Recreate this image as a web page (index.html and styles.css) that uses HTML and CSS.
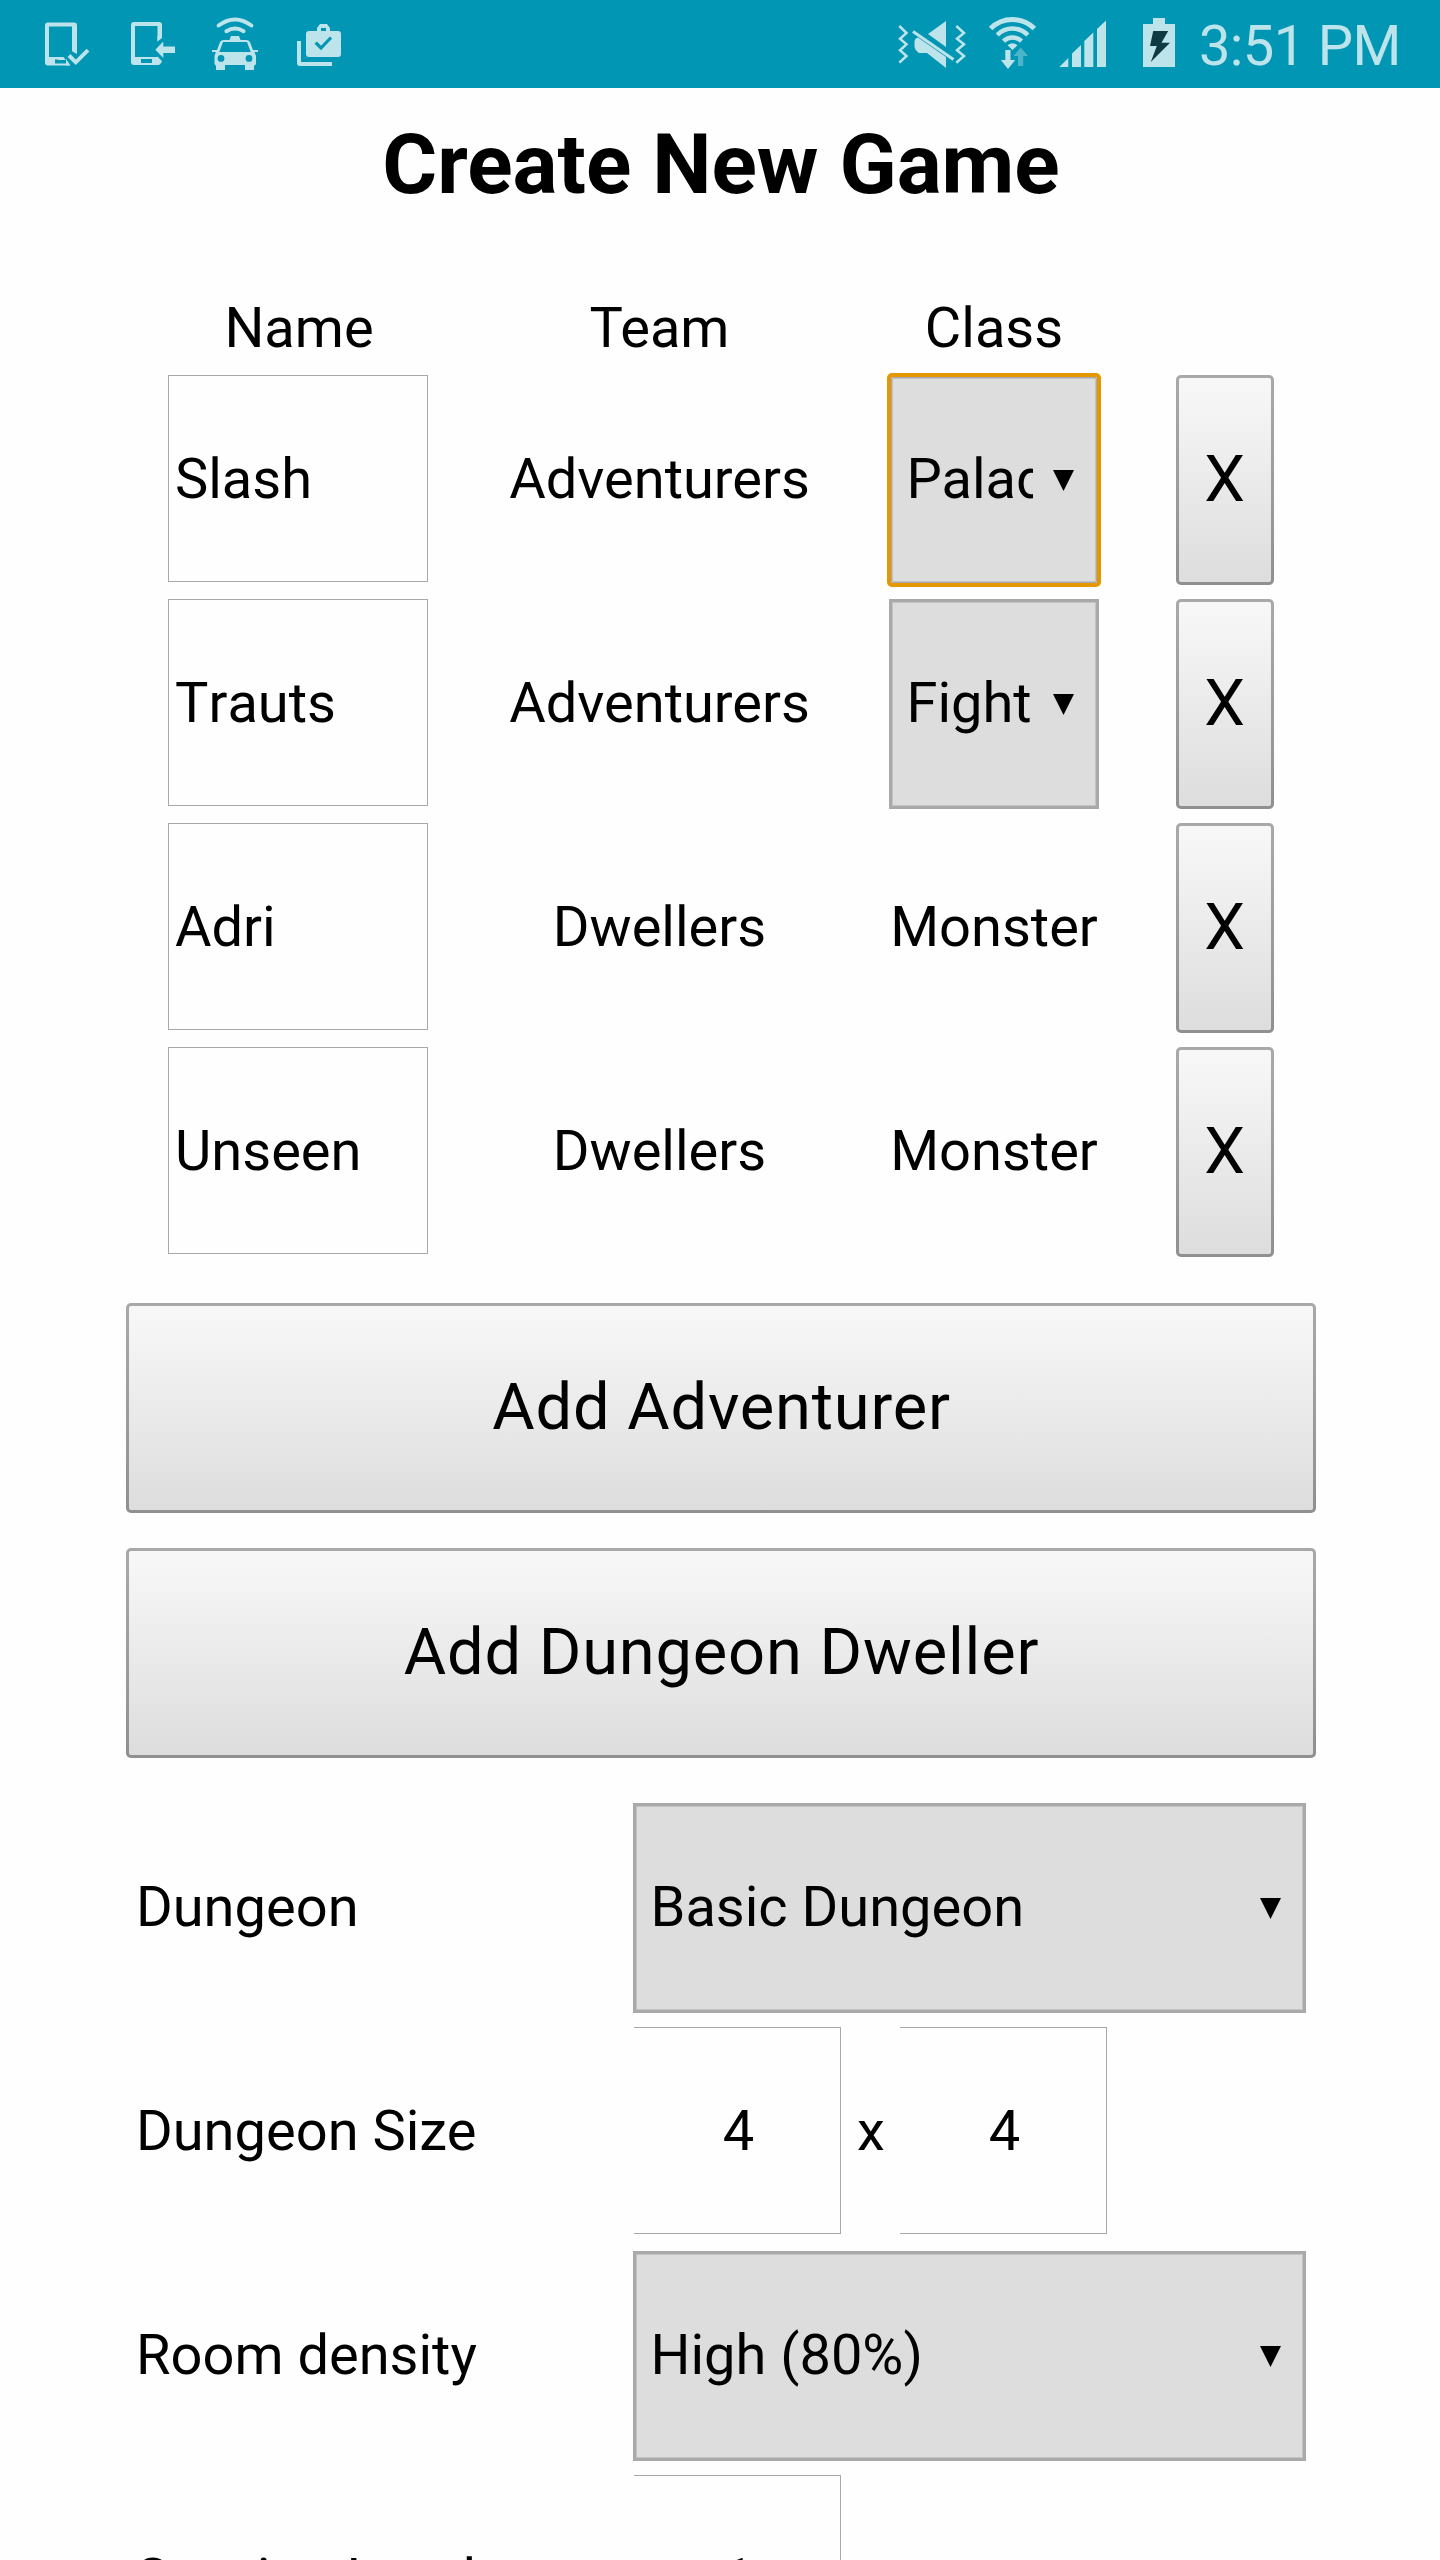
FILE: index.html
```html
<!DOCTYPE html>
<html lang="en">
<head>
<meta charset="utf-8">
<title>Create New Game</title>
<link rel="stylesheet" href="styles.css">
</head>
<body>
<header class="status">
  <svg class="i-done" viewBox="45 0 45 88" width="45" height="88"><path fill-rule="evenodd" d="M48 22.5H74Q77 22.5 77 25.5V65.5H48Q45 65.5 45 62.5V25.5Q45 22.5 48 22.5ZM49 26.5V57H72V26.5ZM55 59.5V63.5H72V59.5Z"/><path class="bar-fill" d="M62.5 56L69 49.5L77 54V67H70.5Z"/><path d="M72.5 40H77V51L75.5 53L72.5 50ZM58 57H63L66 60H58Z"/><path d="M66 59L70.5 65.5H66Z"/><path class="line w4" d="M69 55.5L75.8 62.3L88 50.2"/></svg>
  <svg class="i-transfer" viewBox="131 0 45 88" width="45" height="88"><path fill-rule="evenodd" d="M134 22H159Q162 22 162 25V65H134Q131 65 131 62V25Q131 22 134 22ZM135 26V57H157.5V26ZM141 59V63H152V59Z"/><path class="bar-fill" d="M157 41.5L163 36V68L158 65.5L162 61L157 56Z"/><path d="M157.5 36H162V38L157.5 41.5ZM157 57L162 62L159 65H156ZM155.3 49.8L163.3 41.5V46.5H175V53H163.3V58Z"/></svg>
  <svg class="i-taxi" viewBox="212 0 46 88" width="46" height="88"><path class="line w4 round" d="M218.6 25.5Q235 13.5 251.4 25.5M226.4 31.2Q235 26 243.6 31.2"/><path fill-rule="evenodd" d="M229.5 40L231 36H239L240.5 40H246Q249 40 250 42L253 50H258V52H254.5L256 56V64L254 66V70H245V65H225V70H216V66L214.5 64V56L215.8 52H212V50H217L220 42Q221 40 224 40ZM223 42L219.3 52H250.7L247 42ZM221 55A3.4 3.4 0 1 0 221 61.8A3.4 3.4 0 1 0 221 55ZM249 55A3.4 3.4 0 1 0 249 61.8A3.4 3.4 0 1 0 249 55Z"/></svg>
  <svg class="i-work" viewBox="297 0 45 88" width="45" height="88"><path fill-rule="evenodd" d="M309 31H317V28L320 24H327L330 28V31H338Q341 31 341 34V54Q341 57 338 57H309Q306 57 306 54V34Q306 31 309 31ZM321 28V31H326V28Z"/><path class="check" d="M315.7 42.7L321 48L331 37.5"/><path d="M297 41H301V62H332V66H300Q297 66 297 63Z"/></svg>
  <svg class="i-mute" viewBox="897 0 70 88" width="70" height="88"><path class="line w25" d="M899.3 26L906.5 33L900 38.7L906.5 44.3L900 50.3L906.5 56L899.3 62.7M956.3 26L964 33L957 38.7L964 44.3L957 50.3L964 56L956.3 62.7"/><path class="line w3" d="M913 31.5L953.5 59.5"/><path d="M928 34L946 21V47ZM918 37.5L946 57V68L927 53H919Q914.5 50 914.5 46V41Q915 38 918 37.5Z"/></svg>
  <svg class="i-wifi" viewBox="988 0 50 88" width="50" height="88"><path class="line w5" d="M990.6 28.6A31 31 0 0 1 1034.4 28.6"/><path class="line w45" d="M997.2 35A21.5 21.5 0 0 1 1027.8 35M1003.5 41.2A12.7 12.7 0 0 1 1021.5 41.2"/><path d="M1007.5 45.3Q1012.5 41.3 1017.5 45.3L1012.5 50ZM1005.3 50H1010.5V60H1015.2L1008 69L1000.8 60H1005.3Z"/><path class="faint" d="M1020.7 47.5L1028 56H1023.2V66H1018V56H1013.4Z"/></svg>
  <svg class="i-signal" viewBox="1059 0 48 88" width="48" height="88"><path d="M1059.3 67L1068.3 58V67ZM1072 67V53.5L1081 45V67ZM1084.3 67V41L1093.3 32.5V67ZM1097 67V29L1106 20.5V67Z"/></svg>
  <svg class="i-battery" viewBox="1143 0 32 88" width="32" height="88"><path d="M1153 18H1165V24H1175V67H1143V24H1153Z"/><path class="bolt" d="M1153.2 31H1168.2L1161.5 42.7H1170L1150.8 62L1156.8 46H1150Z"/></svg>
  <span class="clock">3:51 PM</span>
</header>
<main class="page">
  <h1 class="title">Create New Game</h1>
  <section class="players">
    <div class="head">Name</div><div class="head">Team</div><div class="head last">Class</div><div></div>
    <div class="field">Slash</div><div class="text">Adventurers</div>
    <div class="select focused"><span class="value">Paladin</span><svg class="arrow" viewBox="0 0 21 21"><path d="M0 0H21L10.5 21Z"/></svg></div>
    <button class="button remove">X</button>
    <div class="field">Trauts</div><div class="text">Adventurers</div>
    <div class="select"><span class="value">Fighter</span><svg class="arrow" viewBox="0 0 21 21"><path d="M0 0H21L10.5 21Z"/></svg></div>
    <button class="button remove">X</button>
    <div class="field">Adri</div><div class="text">Dwellers</div><div class="text last">Monster</div>
    <button class="button remove">X</button>
    <div class="field">Unseen</div><div class="text">Dwellers</div><div class="text last">Monster</div>
    <button class="button remove">X</button>
  </section>
  <section class="actions">
    <button class="button">Add Adventurer</button>
    <button class="button">Add Dungeon Dweller</button>
  </section>
  <section class="options">
    <div class="label">Dungeon</div>
    <div class="select"><span class="value">Basic Dungeon</span><svg class="arrow" viewBox="0 0 21 21"><path d="M0 0H21L10.5 21Z"/></svg></div>
    <div class="label">Dungeon Size</div>
    <div class="size"><div class="number">4</div><div class="times">x</div><div class="number">4</div></div>
    <div class="label">Room density</div>
    <div class="select"><span class="value">High (80%)</span><svg class="arrow" viewBox="0 0 21 21"><path d="M0 0H21L10.5 21Z"/></svg></div>
    <div class="label">Starting Level</div>
    <div class="size"><div class="number">1</div></div>
  </section>
</main>
</body>
</html>
```
FILE: styles.css
```css
* { box-sizing: border-box; }
body {
  margin: 0;
  height: 2560px;
  overflow: hidden;
  background: #fefefe;
  color: #000;
  font: 56px/66px Roboto, "Liberation Sans", sans-serif;
}

/* Status bar */
.status {
  display: flex;
  height: 88px;
  padding-left: 45px;
  background: #0096b4;
  color: #bce4ea;
}
.status svg { flex: none; fill: #bce4ea; }
.status .i-transfer { margin-left: 41px; }
.status .i-taxi { margin-left: 36px; }
.status .i-work { margin-left: 39px; }
.status .i-mute { margin-left: 555px; }
.status .i-wifi { margin-left: 21px; }
.status .i-signal { margin-left: 21px; }
.status .i-battery { margin-left: 36px; }
.status .bar-fill { fill: #0096b4; }
.status .line { fill: none; stroke: #bce4ea; }
.w25 { stroke-width: 2.5; }
.w3 { stroke-width: 3; }
.w4 { stroke-width: 4; }
.w45 { stroke-width: 4.5; }
.w5 { stroke-width: 5; }
.round { stroke-linecap: round; }
.status .check { fill: none; stroke: #0096b4; stroke-width: 3.2; }
.status .faint { fill: #4db5ca; }
.status .bolt { fill: #0f3a44; }
.clock {
  margin-left: 24px;
  padding-top: 13px;
  letter-spacing: -0.6px;
  white-space: nowrap;
}

/* Page */
.title {
  margin: 27px 0 80px;
  padding-left: 2px;
  font-size: 84px;
  line-height: 100px;
  font-weight: 700;
  text-align: center;
}
.players {
  display: grid;
  grid-template-columns: 260px 461px 210px 98px;
  grid-template-rows: 66px repeat(4, 210px);
  row-gap: 14px;
  padding-left: 168px;
}
.players > :nth-child(4n) { margin-left: 77px; width: 98px; }
.head, .text { padding-left: 2px; text-align: center; }
.text { line-height: 208px; }
.last { padding-left: 0; }
.field {
  height: 207px;
  padding-left: 6px;
  border: 1px solid #a9a9a9;
  line-height: 206px;
  font-kerning: none;
}
.select {
  display: flex;
  align-items: center;
  height: 210px;
  padding: 0 22px 0 14.5px;
  border: 3px solid #a9a9a9;
  background: #ddd;
  box-shadow: inset 0 0 0 1px #c3c3c3;
}
.focused {
  border: 1px solid #a9a9a9;
  margin: 2px;
  width: 206px;
  height: 206px;
  outline: 4px solid #e59700;
  border-radius: 1px;
}
.value {
  flex: 1;
  overflow: hidden;
  line-height: 208px;
  height: 210px;
  white-space: nowrap;
}
.arrow { flex: none; width: 21px; height: 21px; margin-left: 20px; }
.button {
  display: block;
  height: 210px;
  padding: 0 0 2px;
  border: 3px solid transparent;
  border-radius: 5px;
  background:
    linear-gradient(#f8f8f8, #ddd) padding-box,
    linear-gradient(#a9a9a9, #909090) border-box;
  color: #000;
  font: 65px/76px Roboto, "Liberation Sans", sans-serif;
  letter-spacing: 0.8px;
}
.actions {
  display: grid;
  gap: 35px;
  margin: 46px 124px 45px 126px;
}
.actions .button { padding-left: 1px; }
.options {
  display: grid;
  grid-template-columns: 497px 673px;
  row-gap: 14px;
  padding-left: 136px;
}
.label { height: 210px; line-height: 208px; }
.size { display: flex; padding-left: 1px; }
.number {
  width: 207px;
  height: 207px;
  padding-left: 3px;
  border: 1px solid #a9a9a9;
  border-left: 0;
  line-height: 206px;
  text-align: center;
}
.times { width: 59px; padding-left: 1px; line-height: 208px; text-align: center; }
```
